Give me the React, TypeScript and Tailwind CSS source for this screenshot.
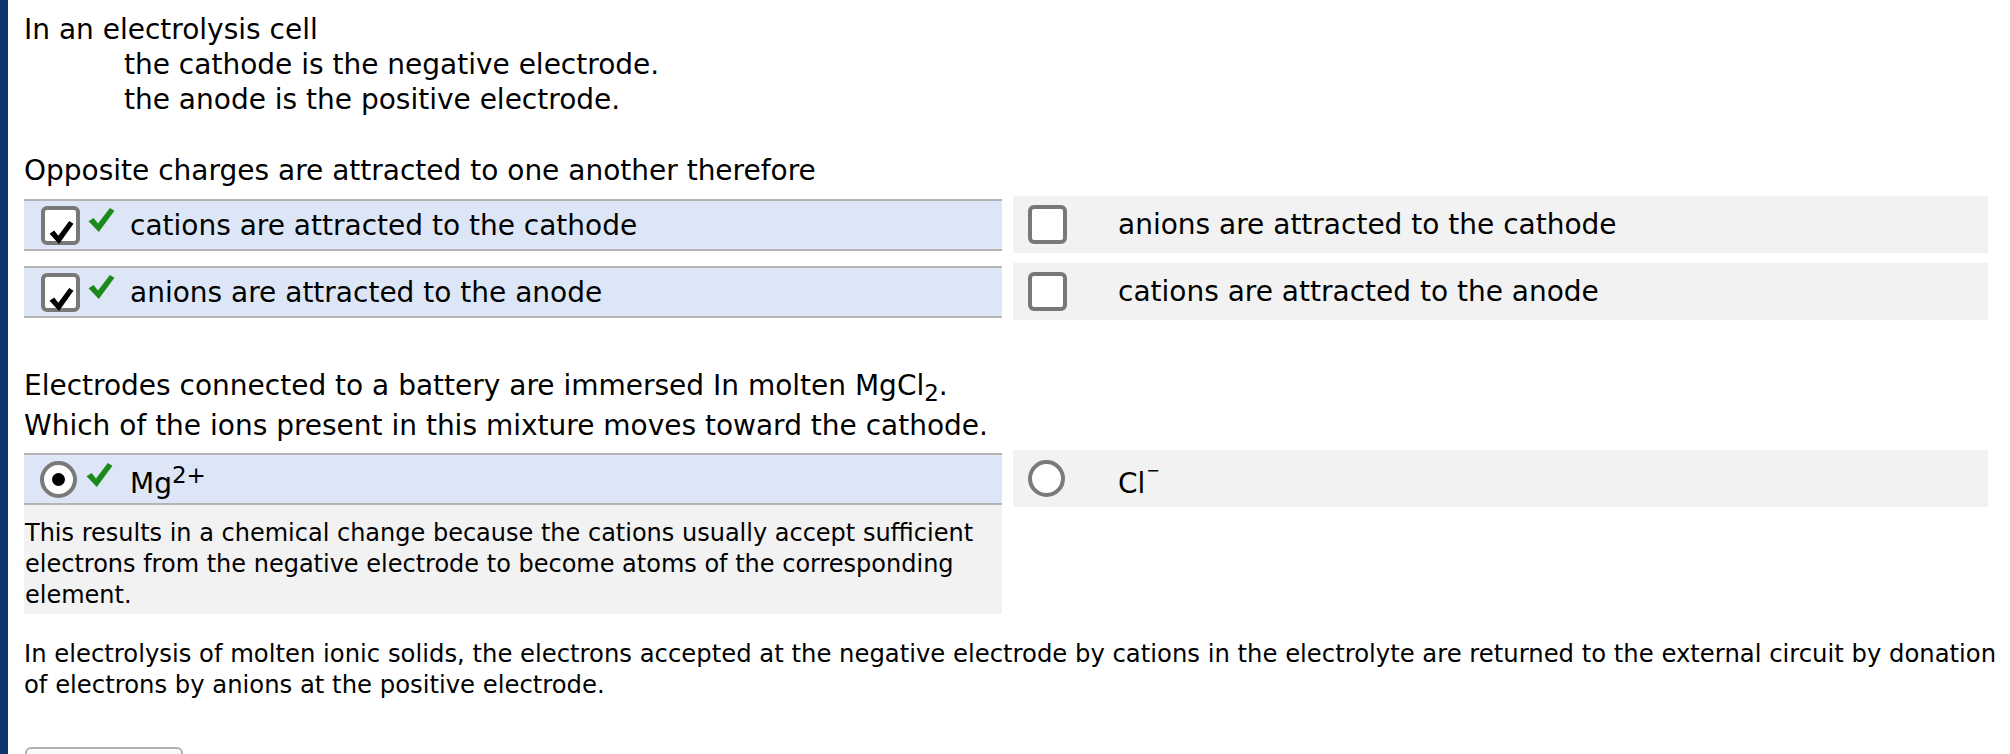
import React from "react";

function CheckShape({ w, h, color }: { w: number; h: number; color: string }) {
  return (
    <svg width={w} height={h} viewBox="0 0 24 22" preserveAspectRatio="none">
      <path d="M0.5 12.2 L5 9.2 L8.9 14.2 L19.4 0 L23.5 2.6 L9.6 22 Z" fill={color} />
    </svg>
  );
}

function Checkbox({ checked }: { checked?: boolean }) {
  return (
    <div className="relative w-[39px] h-[39px] shrink-0 rounded-[6px] border-[4px] border-[#787878] bg-white">
      {checked && (
        <div className="absolute left-[4px] top-[11px]">
          <CheckShape w={25} h={23} color="#000" />
        </div>
      )}
    </div>
  );
}

function Radio({ checked }: { checked?: boolean }) {
  return (
    <div className="w-[37px] h-[37px] shrink-0 rounded-full border-[4px] border-[#7a7a7a] bg-white flex items-center justify-center">
      {checked && <div className="w-[13px] h-[13px] rounded-full bg-black" />}
    </div>
  );
}

function GreenCheck({ shift }: { shift: string }) {
  return (
    <div className={`ml-[8px] relative ${shift}`}>
      <CheckShape w={27} h={24} color="#1b8a1b" />
    </div>
  );
}

function LeftCheckItem({ text }: { text: string }) {
  return (
    <div className="h-[57px] pt-[3px]">
      <div className="h-[52px] bg-[#dce6f6] border-y-2 border-[#b4b4b4] flex items-center pl-[17px]">
        <Checkbox checked />
        <GreenCheck shift="-top-[5px]" />
        <span className="ml-[15px] whitespace-nowrap">{text}</span>
      </div>
    </div>
  );
}

function RightCheckItem({ text }: { text: string }) {
  return (
    <div className="h-[57px] bg-[#f2f2f2] flex items-center pl-[15px]">
      <Checkbox />
      <span className="ml-[51px] whitespace-nowrap">{text}</span>
    </div>
  );
}

export default function App() {
  return (
    <div className="flex min-h-screen bg-white text-black font-['DejaVu_Sans',sans-serif]">
      <div className="w-[8px] shrink-0 bg-[#0c386b]" />
      <div className="flex-1 pl-[16px] pr-[22px]">
        <div className="pt-[12px] text-[28px] leading-[35px]">
          <div>In an electrolysis cell</div>
          <div className="pl-[100px]">the cathode is the negative electrode.</div>
          <div className="pl-[100px]">the anode is the positive electrode.</div>
          <div className="mt-[36px]">Opposite charges are attracted to one another therefore</div>
        </div>

        <div className="mt-[8px] grid grid-cols-[978px_975px] gap-x-[11px] gap-y-[10px] text-[28px] leading-[35px]">
          <LeftCheckItem text="cations are attracted to the cathode" />
          <RightCheckItem text="anions are attracted to the cathode" />
          <LeftCheckItem text="anions are attracted to the anode" />
          <RightCheckItem text="cations are attracted to the anode" />
        </div>

        <div className="mt-[48px] text-[28px] leading-[35px]">
          <div className="h-[40px]">
            Electrodes connected to a battery are immersed In molten MgCl
            <sub className="text-[23px]">2</sub>.
          </div>
          <div>Which of the ions present in this mixture moves toward the cathode.</div>
        </div>

        <div className="mt-[7px] grid grid-cols-[978px_975px] gap-x-[11px] items-start">
          <div>
            <div className="pt-[3px]">
              <div className="h-[52px] bg-[#dce6f6] border-y-2 border-[#b4b4b4] flex items-center pl-[16px] text-[28px] leading-[35px]">
                <Radio checked />
                <div className="ml-[1px]">
                  <GreenCheck shift="-top-[4px]" />
                </div>
                <span className="ml-[17px] relative top-[4px] whitespace-nowrap">
                  Mg<sup className="text-[23px] -top-[10px]">2+</sup>
                </span>
              </div>
            </div>
            <div className="bg-[#f2f2f2] pt-[13px] pb-[3px] pl-[1px] text-[24px] leading-[31px] whitespace-nowrap">
              This results in a chemical change because the cations usually accept sufficient
              <br />
              electrons from the negative electrode to become atoms of the corresponding
              <br />
              element.
            </div>
          </div>
          <div className="h-[57px] bg-[#f2f2f2] flex items-center pl-[15px] text-[28px] leading-[35px]">
            <Radio />
            <span className="ml-[53px] relative top-[5px] whitespace-nowrap">
              Cl<sup className="text-[16px] -top-[17px] ml-[1px]">−</sup>
            </span>
          </div>
        </div>

        <div className="mt-[24px] text-[24.3px] leading-[31px] whitespace-nowrap">
          In electrolysis of molten ionic solids, the electrons accepted at the negative electrode by cations in the electrolyte are returned to the external circuit by donation
          <br />
          of electrons by anions at the positive electrode.
        </div>

        <div className="mt-[47px] ml-[1px] w-[158px] h-[40px] rounded-[6px] border-2 border-[#b0b0b0] bg-[#fafafa]" />
      </div>
    </div>
  );
}
